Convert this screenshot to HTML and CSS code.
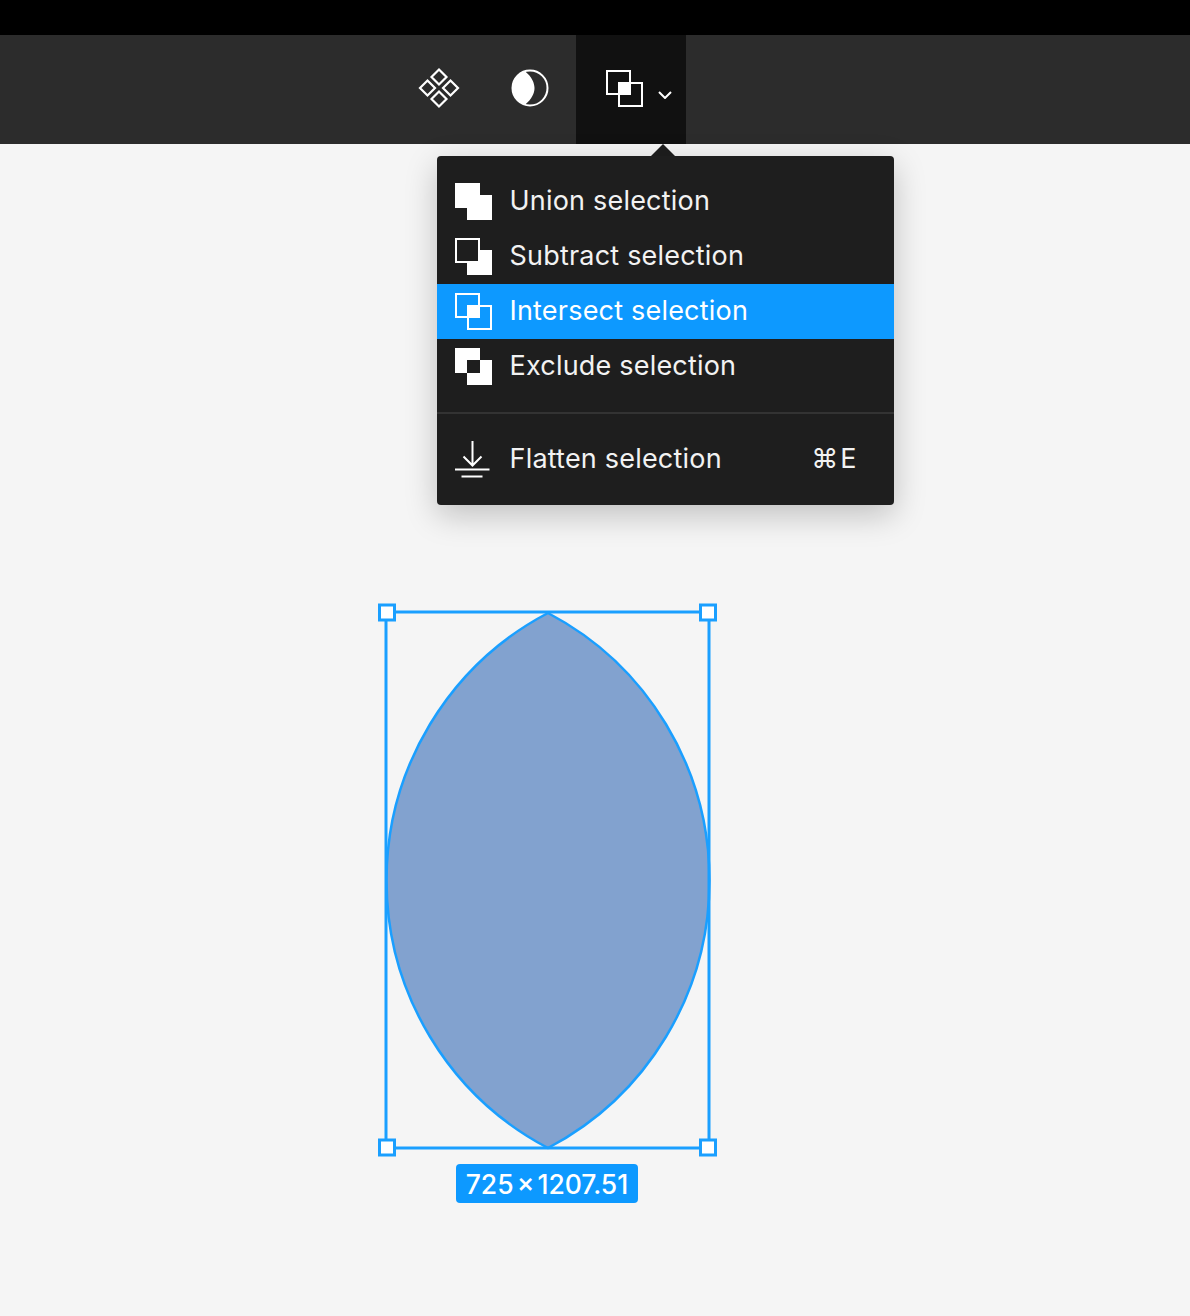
FILE: index.html
```html
<!doctype html>
<html>

<head>
    <title>Boolean selection menu</title>
    <meta charset="utf-8" />
    <meta name="viewport" content="width=device-width, initial-scale=1.0">
    <link rel="stylesheet" href="styles.css">
</head>

<body>
    <div class="topbar"></div>
    <div class="toolbar">
        <div class="tool">
            <svg class="tool-icon" width="44" height="44" viewBox="0 0 44 44">
                <g fill="none" stroke="#fff" stroke-width="2.2">
                    <path d="M22 3.5l7.5 7.5-7.5 7.5-7.5-7.5z" />
                    <path d="M10.5 14.5l7.5 7.5-7.5 7.5L3 22z" />
                    <path d="M33.5 14.5L41 22l-7.5 7.5L26 22z" />
                    <path d="M22 25.5l7.5 7.5-7.5 7.5-7.5-7.5z" />
                </g>
            </svg>
        </div>
        <div class="tool">
            <svg class="tool-icon" width="40" height="40" viewBox="0 0 40 40">
                <circle cx="20" cy="20" r="17.5" fill="none" stroke="#fff" stroke-width="2" />
                <path d="M15 3.2A17.5 17.5 0 0 0 15 36.8C22 31 24.5 25 24.5 20S22 9 15 3.2z" fill="#fff" />
            </svg>
        </div>
        <div class="tool tool-active">
            <svg class="bool-icon" width="37" height="37" viewBox="0 0 37 37">
                <g fill="none" stroke="#fff" stroke-width="2">
                    <rect x="1" y="1" width="23" height="23" />
                    <rect x="13" y="13" width="23" height="23" />
                </g>
                <rect x="12" y="12" width="13" height="13" fill="#fff" />
            </svg>
            <svg class="chevron" width="14" height="8" viewBox="0 0 14 8">
                <path d="M1 1l6 6 6-6" fill="none" stroke="#fff" stroke-width="2" />
            </svg>
        </div>
    </div>
    <div class="canvas">
        <!-- selected shape, coordinates are the canvas itself -->
        <svg class="selection" width="360" height="620" viewBox="0 0 360 620">
            <path d="M180 1A302.3 302.3 0 0 1 180 536A302.3 302.3 0 0 1 180 1z" fill="#82a2cf" stroke="#1a9fff" stroke-width="2.5" />
            <rect x="18" y="0" width="323" height="536" fill="none" stroke="#1a9fff" stroke-width="3" />
            <g fill="#fff" stroke="#1a9fff" stroke-width="3">
                <rect x="11.5" y="-7" width="15" height="15" />
                <rect x="332.5" y="-7" width="15" height="15" />
                <rect x="11.5" y="528" width="15" height="15" />
                <rect x="332.5" y="528" width="15" height="15" />
            </g>
        </svg>
        <div class="size-label">725 × 1207.51</div>

        <div class="menu-arrow"></div>
        <div class="menu">
            <div class="menu-group">
                <div class="menu-item">
                    <svg class="bool-icon" width="37" height="37" viewBox="0 0 37 37">
                        <rect x="0" y="0" width="25" height="25" fill="#fff" />
                        <rect x="12" y="12" width="25" height="25" fill="#fff" />
                    </svg>
                    <span class="menu-label">Union selection</span>
                </div>
                <div class="menu-item">
                    <svg class="bool-icon" width="37" height="37" viewBox="0 0 37 37">
                        <rect x="12" y="12" width="25" height="25" fill="#fff" />
                        <rect x="1" y="1" width="23" height="23" fill="#1e1e1e" stroke="#fff" stroke-width="2" />
                    </svg>
                    <span class="menu-label">Subtract selection</span>
                </div>
                <div class="menu-item menu-item-active">
                    <svg class="bool-icon" width="37" height="37" viewBox="0 0 37 37">
                        <g fill="none" stroke="#fff" stroke-width="2">
                            <rect x="1" y="1" width="23" height="23" />
                            <rect x="13" y="13" width="23" height="23" />
                        </g>
                        <rect x="12" y="12" width="13" height="13" fill="#fff" />
                    </svg>
                    <span class="menu-label">Intersect selection</span>
                </div>
                <div class="menu-item">
                    <svg class="bool-icon" width="37" height="37" viewBox="0 0 37 37">
                        <rect x="0" y="0" width="25" height="25" fill="#fff" />
                        <rect x="12" y="12" width="25" height="25" fill="#fff" />
                        <rect x="12" y="12" width="13" height="13" fill="#1e1e1e" />
                    </svg>
                    <span class="menu-label">Exclude selection</span>
                </div>
            </div>
            <div class="menu-divider"></div>
            <div class="menu-group">
                <div class="menu-item">
                    <svg class="bool-icon" width="37" height="37" viewBox="0 0 37 37">
                        <g fill="none" stroke="#fff" stroke-width="2">
                            <path d="M17.5 0v24M8.5 15.5l9 9 9-9" />
                            <path d="M0 28.5h34.5M6.5 35.5h21" />
                        </g>
                    </svg>
                    <span class="menu-label grow">Flatten selection</span>
                    <span class="menu-label shortcut">⌘E</span>
                </div>
            </div>
        </div>
    </div>
</body>

</html>
```

FILE: styles.css
```css
html, body { height: 100%; }
body { margin: 0; display: flex; flex-direction: column; height: 1316px; overflow: hidden; background-color: #f5f5f5; font-family: Inter, "DejaVu Sans", sans-serif; }
.topbar { height: 35px; background-color: #000; }
.toolbar { height: 109px; display: flex; padding-left: 393px; background-color: #2c2c2c; }
.tool { width: 91.5px; box-sizing: border-box; padding-bottom: 3px; display: flex; align-items: center; justify-content: center; }
.tool-active { width: 110px; padding: 0; background-color: #111; position: relative; }
.tool-active .bool-icon { position: absolute; left: 30px; top: 35px; }
.chevron { position: absolute; left: 82px; top: 56px; }
.canvas { flex-grow: 1; position: relative; }
.selection { position: absolute; left: 368px; top: 468px; overflow: visible; }
.size-label { position: absolute; left: 456px; top: 1020px; width: 182px; height: 39px; border-radius: 4px; background-color: #0d99ff; color: #fff; font-size: 26.5px; font-weight: 500; line-height: 40px; text-align: center; word-spacing: -4px; white-space: nowrap; }
.menu { position: absolute; left: 437px; top: 12px; width: 456.5px; height: 349px; box-sizing: border-box; padding: 18px 0; border-radius: 4px; background-color: #1e1e1e; color: #f2f2f2; font-size: 27px; box-shadow: 0 10px 32px rgba(0, 0, 0, 0.22); }
.menu-arrow { position: absolute; left: 651px; top: 0; width: 0; height: 0; border-left: 12px solid transparent; border-right: 12px solid transparent; border-bottom: 12px solid #1e1e1e; }
.menu-item { height: 55px; display: flex; align-items: center; padding: 0 35px 0 18px; }
.menu-item .bool-icon { margin-right: 18px; flex-shrink: 0; }
.menu-label { margin-left: -0.5px; margin-bottom: 2px; letter-spacing: 0.2px; }
.menu-item-active { background-color: #0d99ff; color: #fff; }
.menu-divider { height: 2px; margin: 18px 0; background-color: #333; }
.grow { flex-grow: 1; }
.shortcut { letter-spacing: 2px; }
```
